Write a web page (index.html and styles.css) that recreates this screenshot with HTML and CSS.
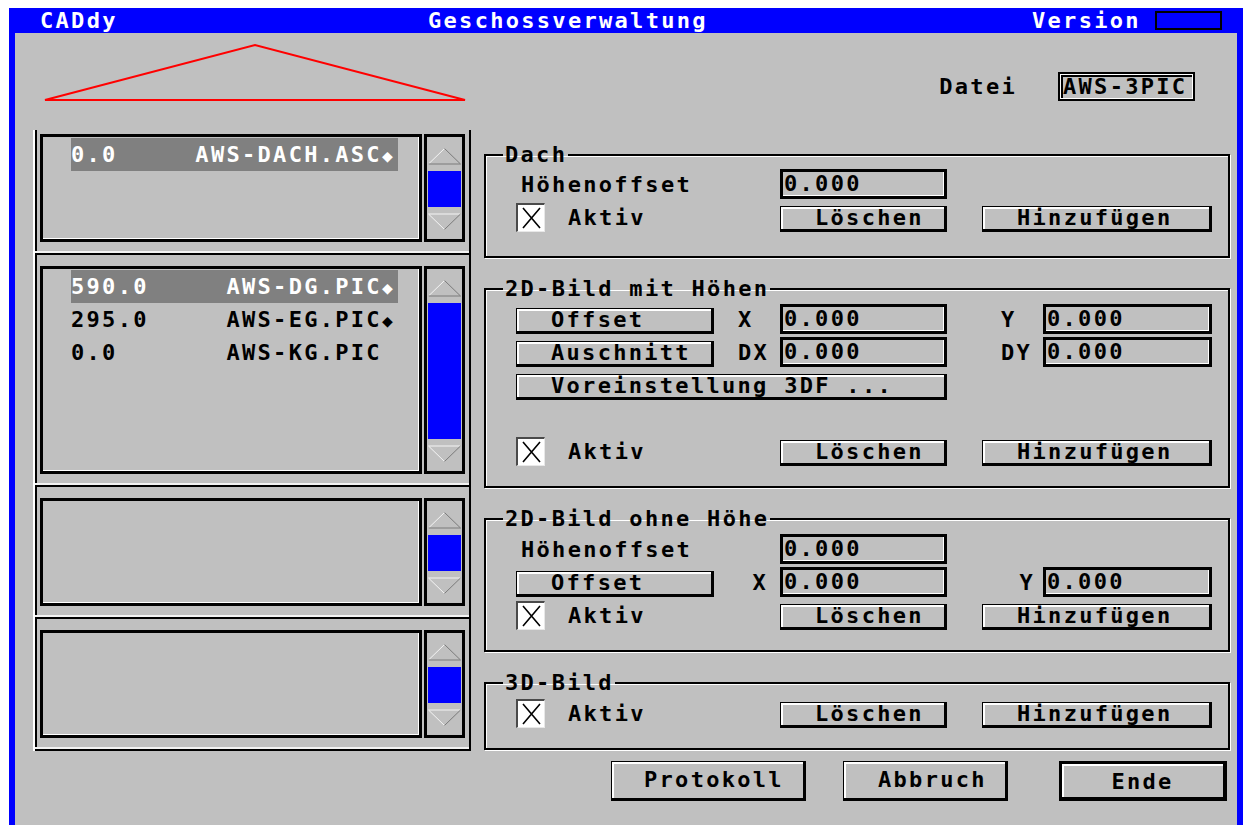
FILE: index.html
```html
<!DOCTYPE html>
<html lang="de">
<head>
<meta charset="utf-8">
<title>CADdy – Geschossverwaltung</title>
<link rel="stylesheet" href="styles.css">
</head>
<body>
<div class="window">
  <div class="titlebar">
    <span class="t-app">CADdy</span>
    <span class="t-caption">Geschossverwaltung</span>
    <span class="t-version">Version</span>
    <span class="t-version-box"></span>
  </div>

  <div class="client">
    <!-- left side: house outline and one list per storey -->
    <div class="left">
      <svg class="roof" width="438" height="97" viewBox="0 0 438 97">
        <polygon points="12,67 222,12 432,67" fill="none" stroke="#ff0000" stroke-width="2"/>
      </svg>

      <div class="floors">
        <div class="floor floor-first">
          <div class="listbox">
            <div class="entry selected">0.0     AWS-DACH.ASC<span class="mark">◆</span></div>
          </div>
          <div class="scrollbar">
            <svg class="arrow" width="33" height="17" viewBox="0 0 33 17"><polyline points="0.5,16 16.5,0.5" stroke="#f4f4f4" fill="none"/><polyline points="16.5,0.5 32.5,16 0.5,16" stroke="#7a7a7a" fill="none"/></svg>
            <div class="thumb"></div>
            <svg class="arrow" width="33" height="17" viewBox="0 0 33 17"><polyline points="32.5,1 0.5,1 16.5,16.5" stroke="#f4f4f4" fill="none"/><polyline points="16.5,16.5 32.5,1" stroke="#7a7a7a" fill="none"/></svg>
          </div>
        </div>

        <div class="floor">
          <div class="listbox listbox-tall">
            <div class="entry selected">590.0     AWS-DG.PIC<span class="mark">◆</span></div>
            <div class="entry">295.0     AWS-EG.PIC<span class="mark">◆</span></div>
            <div class="entry">0.0       AWS-KG.PIC</div>
          </div>
          <div class="scrollbar">
            <svg class="arrow" width="33" height="17" viewBox="0 0 33 17"><polyline points="0.5,16 16.5,0.5" stroke="#f4f4f4" fill="none"/><polyline points="16.5,0.5 32.5,16 0.5,16" stroke="#7a7a7a" fill="none"/></svg>
            <div class="thumb"></div>
            <svg class="arrow" width="33" height="17" viewBox="0 0 33 17"><polyline points="32.5,1 0.5,1 16.5,16.5" stroke="#f4f4f4" fill="none"/><polyline points="16.5,16.5 32.5,1" stroke="#7a7a7a" fill="none"/></svg>
          </div>
        </div>

        <div class="floor">
          <div class="listbox"></div>
          <div class="scrollbar">
            <svg class="arrow" width="33" height="17" viewBox="0 0 33 17"><polyline points="0.5,16 16.5,0.5" stroke="#f4f4f4" fill="none"/><polyline points="16.5,0.5 32.5,16 0.5,16" stroke="#7a7a7a" fill="none"/></svg>
            <div class="thumb"></div>
            <svg class="arrow" width="33" height="17" viewBox="0 0 33 17"><polyline points="32.5,1 0.5,1 16.5,16.5" stroke="#f4f4f4" fill="none"/><polyline points="16.5,16.5 32.5,1" stroke="#7a7a7a" fill="none"/></svg>
          </div>
        </div>

        <div class="floor">
          <div class="listbox"></div>
          <div class="scrollbar">
            <svg class="arrow" width="33" height="17" viewBox="0 0 33 17"><polyline points="0.5,16 16.5,0.5" stroke="#f4f4f4" fill="none"/><polyline points="16.5,0.5 32.5,16 0.5,16" stroke="#7a7a7a" fill="none"/></svg>
            <div class="thumb"></div>
            <svg class="arrow" width="33" height="17" viewBox="0 0 33 17"><polyline points="32.5,1 0.5,1 16.5,16.5" stroke="#f4f4f4" fill="none"/><polyline points="16.5,16.5 32.5,1" stroke="#7a7a7a" fill="none"/></svg>
          </div>
        </div>
      </div>
    </div>

    <!-- right side: file name, layer groups and dialog buttons -->
    <div class="right">
      <div class="file-row">
        <span class="file-label">Datei</span>
        <span class="file-box">AWS-3PIC</span>
      </div>

      <fieldset class="group group-dach">
        <legend>Dach</legend>
        <div class="form">
          <span class="lbl">Höhenoffset</span>
          <span class="field">0.000</span>
          <div class="check-row">
            <span class="check"><svg width="25" height="25" viewBox="0 0 25 25"><path d="M4 3 L21 23 M21 3 L4 23" stroke="#000" stroke-width="1.6" fill="none"/></svg></span>
            <span>Aktiv</span>
          </div>
          <button class="btn btn-delete">Löschen</button>
          <button class="btn btn-add">Hinzufügen</button>
        </div>
      </fieldset>

      <fieldset class="group">
        <legend>2D-Bild mit Höhen</legend>
        <div class="form">
          <button class="btn btn-wide">Offset</button>
          <span class="axis">X</span>
          <span class="field">0.000</span>
          <span class="axis axis-y">Y</span>
          <span class="field field-y">0.000</span>

          <button class="btn btn-wide">Auschnitt</button>
          <span class="axis">DX</span>
          <span class="field">0.000</span>
          <span class="axis axis-y">DY</span>
          <span class="field field-y">0.000</span>

          <button class="btn btn-span">Voreinstellung 3DF ...</button>

          <div class="check-row row-5">
            <span class="check"><svg width="25" height="25" viewBox="0 0 25 25"><path d="M4 3 L21 23 M21 3 L4 23" stroke="#000" stroke-width="1.6" fill="none"/></svg></span>
            <span>Aktiv</span>
          </div>
          <button class="btn btn-delete row-5">Löschen</button>
          <button class="btn btn-add row-5">Hinzufügen</button>
        </div>
      </fieldset>

      <fieldset class="group">
        <legend>2D-Bild ohne Höhe</legend>
        <div class="form">
          <span class="lbl">Höhenoffset</span>
          <span class="field">0.000</span>

          <button class="btn btn-wide">Offset</button>
          <span class="axis axis-right">X</span>
          <span class="field">0.000</span>
          <span class="axis axis-y axis-right">Y</span>
          <span class="field field-y">0.000</span>

          <div class="check-row">
            <span class="check"><svg width="25" height="25" viewBox="0 0 25 25"><path d="M4 3 L21 23 M21 3 L4 23" stroke="#000" stroke-width="1.6" fill="none"/></svg></span>
            <span>Aktiv</span>
          </div>
          <button class="btn btn-delete">Löschen</button>
          <button class="btn btn-add">Hinzufügen</button>
        </div>
      </fieldset>

      <fieldset class="group">
        <legend>3D-Bild</legend>
        <div class="form">
          <div class="check-row">
            <span class="check"><svg width="25" height="25" viewBox="0 0 25 25"><path d="M4 3 L21 23 M21 3 L4 23" stroke="#000" stroke-width="1.6" fill="none"/></svg></span>
            <span>Aktiv</span>
          </div>
          <button class="btn btn-delete">Löschen</button>
          <button class="btn btn-add">Hinzufügen</button>
        </div>
      </fieldset>

      <div class="actions">
        <button class="action action-log">Protokoll</button>
        <button class="action action-cancel">Abbruch</button>
        <button class="action action-end">Ende</button>
      </div>
    </div>
  </div>
</div>
</body>
</html>
```

FILE: styles.css
```css
* {
  box-sizing: border-box;
}

html,
body {
  margin: 0;
  height: 100%;
}

body {
  background: #ffffff;
  overflow: hidden;
  color: #000000;
  font-family: "DejaVu Sans Mono", "Liberation Mono", monospace;
  font-weight: bold;
  font-size: 22px;
  letter-spacing: 2.3px;
}

/* ---------- window frame ---------- */

.window {
  margin: 8px 0 0 9px;
  width: 1234px;
  height: 817px;
  background: #0000ff;
  padding: 0 6px;
  display: flex;
  flex-direction: column;
}

.titlebar {
  height: 25px;
  flex: none;
  display: grid;
  grid-template-columns: 25px 388px 604px 123px 67px;
  align-items: center;
  color: #ffffff;
  line-height: 25px;
}

.t-app {
  grid-column: 2;
}

.t-version-box {
  height: 19px;
  border: 2px solid #000000;
}

.client {
  flex: 1;
  background: #c0c0c0;
  display: flex;
  padding-left: 18px;
}

/* ---------- storey lists ---------- */

.left {
  width: 438px;
  flex: none;
}

.roof {
  display: block;
}

.floors {
  border-left: 2px solid #ffffff;
  border-right: 2px solid #000000;
  box-shadow: inset 2px 0 0 #000000;
}

.floor {
  display: flex;
  padding: 11px 4px 11px 5px;
  border-bottom: 2px solid #000000;
  box-shadow: inset 0 -2px 0 #f2f2f2;
}

.floor-first {
  padding-top: 4px;
}

.listbox {
  width: 382px;
  height: 108px;
  border: 3px solid #000000;
  box-shadow: inset -1px -1px 0 #ffffff;
  padding-top: 1px;
}

.listbox-tall {
  height: 208px;
}

.entry {
  margin-left: 28px;
  width: 327px;
  height: 33px;
  line-height: 33px;
  white-space: pre;
}

.entry.selected {
  background: #808080;
  color: #ffffff;
}

.mark {
  font-size: 18px;
  letter-spacing: 0;
}

.scrollbar {
  width: 41px;
  margin-left: 2px;
  border: 3px solid #000000;
  display: flex;
  flex-direction: column;
  gap: 6px;
  padding: 11px 1px 9px;
}

.arrow {
  display: block;
  flex: none;
}

.thumb {
  flex: 1;
  background: #0000ff;
}

/* ---------- layer groups ---------- */

.right {
  width: 746px;
  margin-left: 13px;
  flex: none;
}

.file-row {
  display: flex;
  justify-content: flex-end;
  align-items: center;
  margin-top: 39px;
  height: 29px;
  padding-right: 35px;
}

.file-label {
  margin-right: 41px;
}

.file-box {
  width: 137px;
  height: 29px;
  border: 2px solid #000000;
  box-shadow: inset 0 0 0 1px #ffffff, inset 2px 2px 0 1px #000000;
  padding-left: 3px;
  line-height: 25px;
}

.group {
  margin: 21px 0 0;
  padding: 5px 0 20px;
  width: 746px;
  min-width: 0;
  border: 2px solid #000000;
  box-shadow: 1px 1px 0 #ffffff, inset 1px 1px 0 #ffffff;
}

.group-dach {
  margin-top: 44px;
  padding-top: 4px;
  padding-bottom: 24px;
}

.group legend {
  margin-left: 17px;
  padding: 0 1px 0 2px;
  height: 20px;
  line-height: 20px;
}

.form {
  display: grid;
  grid-template-columns: 198px 66px 167px 35px 61px 169px;
  grid-auto-rows: 30px;
  row-gap: 3px;
  margin-left: 30px;
  align-items: center;
}

.lbl {
  grid-column: 1 / 3;
  padding-left: 5px;
}

.axis {
  grid-column: 2;
  padding-left: 24px;
}

.axis-y {
  grid-column: 5;
  padding-left: 19px;
}

.axis-right {
  justify-self: end;
  padding-left: 0;
  padding-right: 12px;
}

.axis-y.axis-right {
  padding-right: 8px;
}

.field {
  grid-column: 3;
  height: 30px;
  border: 3px solid #000000;
  box-shadow: inset -1px -1px 0 #ffffff;
  line-height: 24px;
  padding-left: 1px;
}

.field-y {
  grid-column: 6;
}

.btn {
  align-self: end;
  height: 26px;
  margin: 0;
  background: #c0c0c0;
  border-style: solid;
  border-color: #000000;
  border-width: 1px 3px 3px 1px;
  box-shadow: inset 2px 2px 0 #ffffff;
  padding: 0 0 0 34px;
  font: inherit;
  letter-spacing: inherit;
  color: inherit;
  line-height: 22px;
  text-align: left;
  white-space: pre;
}

.btn-wide {
  grid-column: 1;
}

.btn-span {
  grid-column: 1 / 4;
}

.btn-delete {
  grid-column: 3;
}

.btn-add {
  grid-column: 5 / 7;
}

.row-5 {
  grid-row: 5;
}

.check-row {
  grid-column: 1 / 3;
  display: flex;
  align-items: center;
  gap: 23px;
}

.check {
  width: 29px;
  height: 29px;
  flex: none;
  background: #ffffff;
  border-style: solid;
  border-width: 2px 1px 1px 2px;
  border-color: #4a4a4a #e8e8e8 #e8e8e8 #4a4a4a;
  display: flex;
  align-items: center;
  justify-content: center;
}

.check svg {
  display: block;
}

/* ---------- dialog buttons ---------- */

.actions {
  display: flex;
  margin-top: 11px;
  height: 40px;
}

.action {
  height: 40px;
  margin: 0;
  background: #c0c0c0;
  border-style: solid;
  border-color: #000000;
  border-width: 1px 3px 3px 1px;
  box-shadow: inset 2px 2px 0 #ffffff;
  padding: 0 0 0 32px;
  font: inherit;
  letter-spacing: inherit;
  color: inherit;
  text-align: left;
  line-height: 36px;
}

.action-log {
  margin-left: 127px;
  width: 195px;
}

.action-cancel {
  margin-left: 37px;
  width: 165px;
  padding-left: 34px;
}

.action-end {
  margin-left: 51px;
  width: 168px;
  padding-left: 0;
  text-align: center;
  border-width: 3px 4px 4px 3px;
  box-shadow: inset 2px 2px 0 #ffffff;
}
```
